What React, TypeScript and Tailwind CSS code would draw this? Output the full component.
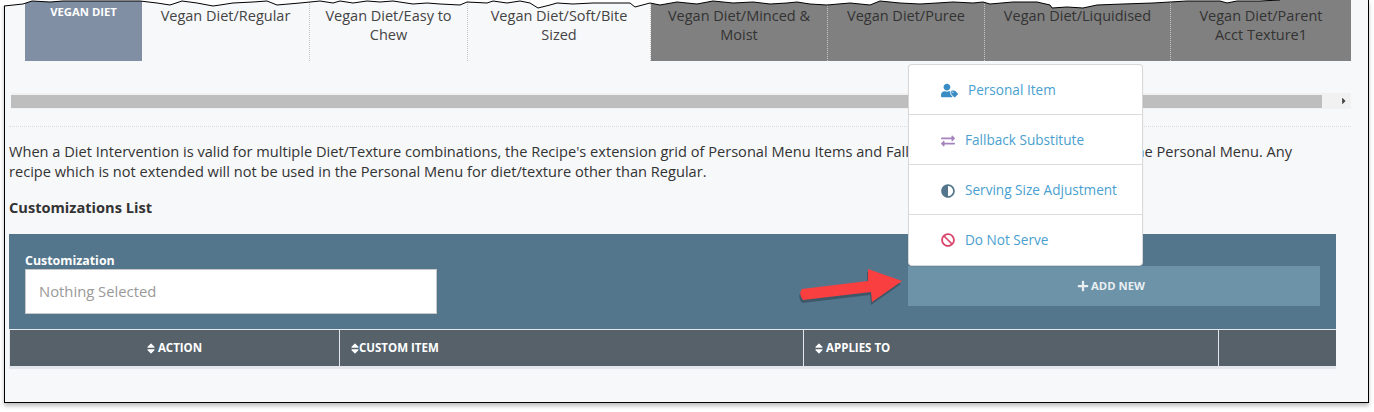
import { FaAdjust, FaBan, FaCaretRight, FaExchangeAlt, FaPlus, FaSort, FaUserTag } from "react-icons/fa";

const tabs = [
  { label: "Vegan Diet/Regular", width: "w-[168px]", off: false },
  { label: "Vegan Diet/Easy to Chew", width: "w-[158px]", off: false },
  { label: "Vegan Diet/Soft/Bite Sized", width: "w-[183px]", off: false },
  { label: "Vegan Diet/Minced & Moist", width: "w-[177px]", off: true },
  { label: "Vegan Diet/Puree", width: "w-[157px]", off: true },
  { label: "Vegan Diet/Liquidised", width: "w-[186px]", off: true },
  { label: "Vegan Diet/Parent Acct Texture1", width: "w-[180px]", off: true },
];

const columns = [
  { label: "ACTION", width: "w-[330px]", center: true, gap: "gap-[3px]" },
  { label: "CUSTOM ITEM", width: "w-[464px]", center: false, gap: "gap-0" },
  { label: "APPLIES TO", width: "w-[415px]", center: false, gap: "gap-[3px]" },
];

// torn paper edge along the top of the screenshot
const tornEdge =
  "4,6 23,4 32,1 50,2 63,1 80,1 100,1 117,1 140,1 157,3 170,5 182,1 197,3 213,6 220,5 233,3 253,2 267,1 277,5 300,3 320,1 333,3 340,1 353,3 367,1 380,2 393,1 413,4 427,3 440,4 460,5 467,2 487,3 493,1 507,3 520,1 530,3 538,8 550,5 557,3 573,4 593,3 617,3 630,3 635,7 650,3 660,5 677,2 697,4 713,1 733,3 753,2 770,4 787,3 797,2 810,4 827,5 850,3 870,5 880,1 900,3 920,4 937,3 953,2 973,3 983,2 990,4 1013,2 1037,2 1050,5 1052,8 1067,7 1083,8 1097,5 1123,4 1153,3 1170,2 1187,1 1220,1 1227,3 1237,1 1260,1 1280,0";

const arrow = "M7 25 L73 17 L73 5 L107 17 L77 38 L76 28 L8 36 Q3 30 7 25 Z";

function MenuItem({ icon, label }: { icon: React.ReactNode; label: string }) {
  return (
    <div className="flex h-[50px] items-center gap-[10px] border-b border-[#dcdcdc] pl-[32px] pt-[2px] text-[13.6px] text-[#4a9fd0] last:border-b-0 last:pt-0">
      {icon}
      <span>{label}</span>
    </div>
  );
}

export default function App() {
  return (
    <div className="relative h-[412px] w-[1374px] overflow-hidden bg-white font-['Open_Sans',sans-serif]">
      <div className="ml-[4px] h-[403px] w-[1365px] border-x border-b border-black bg-[#f7f8fa] pl-[4px] shadow-[0_3px_4px_rgba(0,0,0,0.25)]">
        <div className="ml-[16px] flex h-[61px] w-[1326px]">
          <div className="w-[117px] bg-[#808fa3] pt-[4px] text-center text-[11.3px] font-bold text-white">VEGAN DIET</div>
          {tabs.map((tab) => (
            <div
              key={tab.label}
              className={`${tab.width} border-r border-dotted px-[14px] pt-[6px] text-center text-[14.5px] leading-[19px] last:border-r-0 ${
                tab.off ? "border-[#c8c8c8] bg-[#808080] text-[#333]" : "border-[#c4c4c4] text-[#444]"
              }`}
            >
              {tab.label}
            </div>
          ))}
        </div>

        <div className="ml-[2px] mt-[32px] flex h-[16px] w-[1340px] items-center bg-[#f1f1f1]">
          <div className="h-[13px] w-[1311px] bg-[#bebebe]" />
          <FaCaretRight className="ml-auto mr-[2px] text-[10px] text-[#444]" />
        </div>
        <div className="mt-[17px] w-[1342px] border-t border-dotted border-[#dcdcdc]" />

        <p className="mt-[14px] w-[1330px] text-[14.6px] leading-[20px] text-[#333]">
          When a Diet Intervention is valid for multiple Diet/Texture combinations, the Recipe's extension grid of Personal Menu Items and Fallback Substitutes is extended for the Personal Menu. Any
          <br />
          recipe which is not extended will not be used in the Personal Menu for diet/texture other than Regular.
        </p>
        <h3 className="mt-[16px] text-[14.6px] font-bold leading-[20px] text-[#333]">Customizations List</h3>

        <div className="mt-[17px] w-[1327px] bg-[#54768c]">
          <div className="flex h-[95px] items-start px-[16px]">
            <div className="mt-[19px] w-[412px]">
              <div className="text-[12.4px] font-bold leading-[16px] text-white">Customization</div>
              <div className="flex h-[45px] items-center border border-[#c8c8c8] bg-white pl-[13px] text-[14.8px] text-[#999]">Nothing Selected</div>
            </div>
            <button className="ml-auto mt-[32px] flex h-[40px] w-[412px] items-center justify-center gap-[2px] bg-[#6d93a9] pr-[6px] text-[11.3px] font-bold text-[#e8eef2]">
              <FaPlus className="text-[12px]" />
              ADD NEW
            </button>
          </div>
          <div className="flex h-[40px] border-y border-l border-[#e4e7ec] border-b-[3px] border-r-0 bg-[#566169]">
            {columns.map((col) => (
              <div
                key={col.label}
                className={`flex ${col.width} items-center ${col.gap} border-r border-[#e4e7ec] text-[11.5px] font-bold text-white ${col.center ? "justify-center" : "pl-[11px]"}`}
              >
                <FaSort className="h-[13px] w-[8px]" />
                {col.label}
              </div>
            ))}
          </div>
        </div>
      </div>

      <div className="absolute left-[909px] top-[65px] w-[233px] rounded-[3px] bg-white shadow-[0_0_0_1px_#d8d8d8,0_1px_2px_rgba(0,0,0,0.25)]">
        <MenuItem icon={<FaUserTag className="text-[17px] text-[#3a8cc4]" />} label="Personal Item" />
        <MenuItem icon={<FaExchangeAlt className="text-[14px] text-[#a584bd]" />} label="Fallback Substitute" />
        <MenuItem icon={<FaAdjust className="text-[14px] text-[#54768c]" />} label="Serving Size Adjustment" />
        <MenuItem icon={<FaBan className="text-[14px] text-[#d9436a]" />} label="Do Not Serve" />
      </div>

      <svg className="absolute left-[795px] top-[264px]" width="115" height="44" viewBox="0 0 115 44">
        <path d={arrow} fill="#000" opacity="0.25" transform="translate(-1 3)" />
        <path d={arrow} fill="#f93f3f" />
      </svg>

      <svg className="absolute left-0 top-0" width="1374" height="12" viewBox="0 0 1374 12">
        <polygon points={`0,0 0,6 ${tornEdge} 1374,0`} fill="#fff" />
        <polyline points={tornEdge} fill="none" stroke="#000" strokeWidth="1" />
      </svg>
    </div>
  );
}
